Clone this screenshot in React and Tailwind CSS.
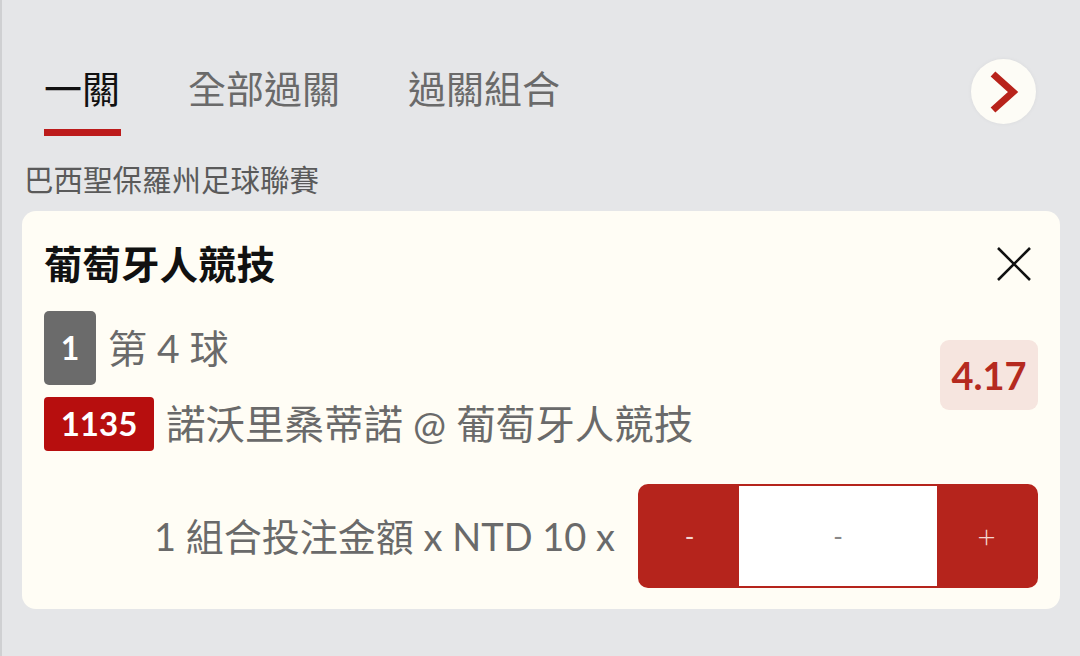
const font = { fontFamily: 'Lato, "Noto Sans CJK TC", sans-serif' };

function Chevron() {
  return (
    <svg width="30" height="42" viewBox="0 0 30 42" fill="none">
      <path d="M4 3 L24 21 L4 39" stroke="#b8231b" strokeWidth="7" strokeLinecap="butt" strokeLinejoin="miter" />
    </svg>
  );
}

function CloseIcon() {
  return (
    <svg width="36" height="36" viewBox="0 0 36 36" fill="none">
      <path d="M2 2 L34 34 M34 2 L2 34" stroke="#111" strokeWidth="2.6" />
    </svg>
  );
}

export default function App() {
  return (
    <div
      className="w-[1080px] h-[656px] overflow-hidden bg-[#e5e6e8] border-l-2 border-[#cfd0d2]"
      style={font}
    >
      {/* tabs */}
      <div className="flex items-start pl-[42px] pr-[44px] pt-[64px] h-[136px]">
        <div className="flex flex-col items-start w-[144px]">
          <span className="text-[38px] leading-[48px] text-[#111]">一關</span>
          <div className="mt-[17px] w-[77px] h-[7px] bg-[#bc1b1b]" />
        </div>
        <span className="text-[38px] leading-[48px] text-[#6a6a6a] w-[220px]">全部過關</span>
        <span className="text-[38px] leading-[48px] text-[#6a6a6a]">過關組合</span>
        <div className="ml-auto mt-[-5px] w-[65px] h-[65px] rounded-full bg-[#fdfcf6] flex items-center justify-center shadow-[0_0_4px_rgba(0,0,0,0.05)]">
          <Chevron />
        </div>
      </div>

      {/* league */}
      <div className="pl-[22px] pt-[24px] h-[75px] text-[29.5px] leading-[40px] text-[#5a5a5a]">
        巴西聖保羅州足球聯賽
      </div>

      {/* card */}
      <div className="mx-[20px] h-[398px] rounded-[14px] bg-[#fffdf5] pl-[22px] pr-[22px] pt-[30px]">
        <div className="flex items-center justify-between h-[46px]">
          <span className="text-[38.5px] font-bold text-[#111] leading-[46px]">葡萄牙人競技</span>
          <span className="mr-[6px]">
            <CloseIcon />
          </span>
        </div>

        <div className="flex items-center mt-[24px]">
          <div className="flex-1">
            <div className="flex items-center">
              <div className="w-[52px] h-[74px] rounded-[5px] bg-[#6b6b6b] flex items-center justify-center text-white font-bold text-[32px]">
                1
              </div>
              <span className="ml-[12px] text-[39px] text-[#6a6a6a] leading-[44px]">第 4 球</span>
            </div>
            <div className="flex items-center mt-[12px]">
              <div className="w-[110px] h-[54px] rounded-[4px] bg-[#b70e0e] flex items-center justify-center text-white font-bold text-[33px]">
                1135
              </div>
              <span className="ml-[12px] text-[39.5px] text-[#6a6a6a] leading-[44px]">諾沃里桑蒂諾 @ 葡萄牙人競技</span>
            </div>
          </div>
          <div className="w-[98px] h-[70px] rounded-[9px] bg-[#f6e5df] flex items-center justify-center text-[38px] font-bold text-[#b52a1f] mb-[12px]">
            4.17
          </div>
        </div>

        <div className="flex items-center justify-end mt-[33px]">
          <span className="text-[38px] leading-[44px] text-[#6a6a6a] mr-[23px]">1 組合投注金額 x NTD 10 x</span>
          <div className="flex w-[400px] h-[104px] rounded-[10px] bg-[#b5241c] p-[2px]">
            <div className="w-[99px] flex items-center justify-center text-[#f3d6d2] text-[26px]">-</div>
            <div className="flex-1 bg-white flex items-center justify-center text-[#888] text-[26px]">-</div>
            <div className="w-[99px] flex items-center justify-center text-[#f3d6d2] text-[32px] font-light">+</div>
          </div>
        </div>
      </div>
    </div>
  );
}
